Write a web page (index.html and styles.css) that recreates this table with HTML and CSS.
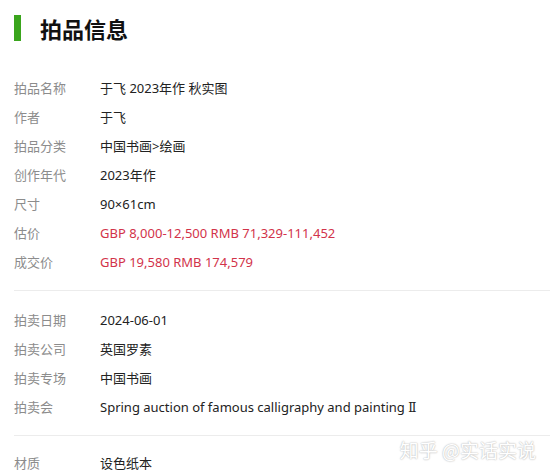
FILE: index.html
```html
<!DOCTYPE html>
<html lang="zh-CN">
<head>
    <meta charset="UTF-8">
    <meta name="viewport" content="width=device-width, initial-scale=1.0">
    <title>拍品信息</title>
    <link rel="stylesheet" href="styles.css">
</head>
<body>
    <div class="panel">
        <h2 class="title">拍品信息</h2>

        <div class="section">
            <div class="row"><span class="label">拍品名称</span><span class="value">于飞 2023年作 秋实图</span></div>
            <div class="row"><span class="label">作者</span><span class="value">于飞</span></div>
            <div class="row"><span class="label">拍品分类</span><span class="value">中国书画&gt;绘画</span></div>
            <div class="row"><span class="label">创作年代</span><span class="value">2023年作</span></div>
            <div class="row"><span class="label">尺寸</span><span class="value">90×61cm</span></div>
            <div class="row"><span class="label">估价</span><span class="value price">GBP 8,000-12,500 RMB 71,329-111,452</span></div>
            <div class="row"><span class="label">成交价</span><span class="value price">GBP 19,580 RMB 174,579</span></div>
        </div>

        <div class="section">
            <div class="row"><span class="label">拍卖日期</span><span class="value">2024-06-01</span></div>
            <div class="row"><span class="label">拍卖公司</span><span class="value">英国罗素</span></div>
            <div class="row"><span class="label">拍卖专场</span><span class="value">中国书画</span></div>
            <div class="row"><span class="label">拍卖会</span><span class="value">Spring auction of famous calligraphy and painting <span class="numeral">Ⅱ</span></span></div>
        </div>

        <div class="section">
            <div class="row"><span class="label">材质</span><span class="value">设色纸本</span></div>
        </div>
    </div>

    <div class="watermark">知乎 @实话实说</div>
</body>
</html>
```

FILE: styles.css
```css
body {
    margin: 0;
    overflow: hidden;
    background: #fff;
    font-family: "Noto Sans", "Noto Sans CJK SC", sans-serif;
    color: #333;
}

.panel {
    padding: 15px 0 0 14px;
}

.title {
    margin: 0 0 32px;
    padding-left: 19px;
    border-left: 7px solid #3aa51d;
    height: 26px;
    line-height: 26px;
    font-size: 22px;
    font-weight: bold;
    color: #111;
    font-family: "Noto Sans CJK SC", sans-serif;
}

.section {
    padding: 0 0 14px;
    border-bottom: 1px solid #ececec;
}

.section + .section {
    padding-top: 14px;
}

.section:last-child {
    border-bottom: none;
    padding-top: 12px;
}

.row {
    display: flex;
    height: 29px;
    align-items: center;
    font-size: 13px;
}

.label {
    width: 86px;
    flex-shrink: 0;
    color: #8c8c8c;
}

.value {
    color: #222;
}

.price {
    color: #d2334a;
}

.numeral {
    font-family: "DejaVu Serif", serif;
    font-size: 12px;
}

/* zhihu watermark sits over the page */
.watermark {
    position: absolute;
    right: 14px;
    bottom: 11px;
    font-size: 19px;
    color: #fff;
    text-shadow: 0 0 2px #bbb, 0 0 1px #c4c4c4;
    font-family: "Noto Sans CJK SC", sans-serif;
}
```
